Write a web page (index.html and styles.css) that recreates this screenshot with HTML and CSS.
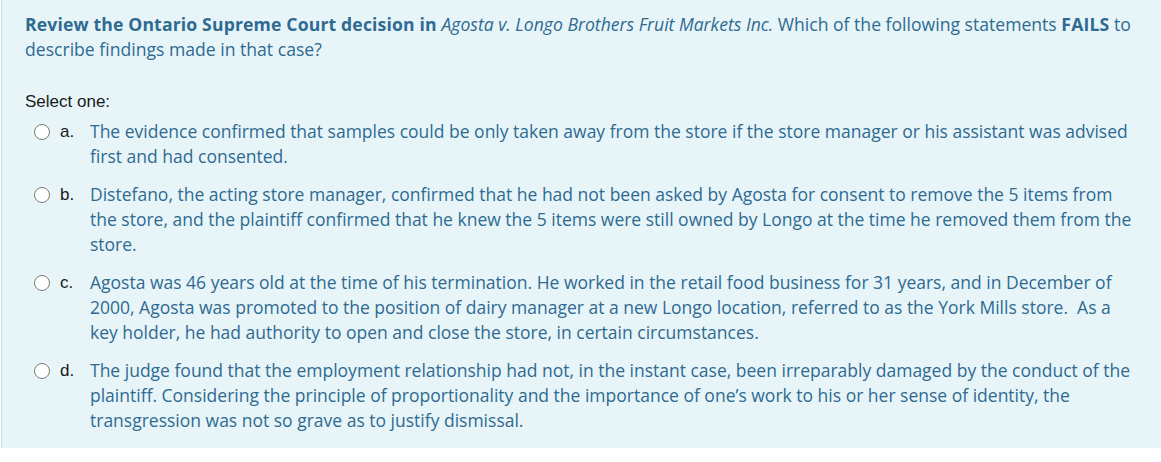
FILE: index.html
```html
<!DOCTYPE html>
<html>
<head>
<meta charset="utf-8">
<link rel="stylesheet" href="styles.css">
</head>
<body>
<div class="formulation">
  <div class="qtext">
    <p><strong>Review the Ontario Supreme Court decision in </strong><em>Agosta v. Longo Brothers Fruit Markets Inc.</em> Which of the following statements <strong>FAILS</strong> to describe findings made in that case?</p>
  </div>
  <div class="ablock">
    <div class="prompt">Select one:</div>
    <div class="answer">
      <div class="opt">
        <span class="radio"></span>
        <span class="letter">a.</span>
        <span class="otext">The evidence confirmed that samples could be only taken away from the store if the store manager or his assistant was advised first and had consented.</span>
      </div>
      <div class="opt">
        <span class="radio"></span>
        <span class="letter">b.</span>
        <span class="otext">Distefano, the acting store manager, confirmed that he had not been asked by Agosta for consent to remove the 5 items from the store, and the plaintiff confirmed that he knew the 5 items were still owned by Longo at the time he removed them from the store.</span>
      </div>
      <div class="opt">
        <span class="radio"></span>
        <span class="letter">c.</span>
        <span class="otext">Agosta was 46 years old at the time of his termination. He worked in the retail food business for 31 years, and in December of 2000, Agosta was promoted to the position of dairy manager at a new Longo location, referred to as the York Mills store.&nbsp; As a key holder, he had authority to open and close the store, in certain circumstances.</span>
      </div>
      <div class="opt">
        <span class="radio"></span>
        <span class="letter">d.</span>
        <span class="otext">The judge found that the employment relationship had not, in the instant case, been irreparably damaged by the conduct of the plaintiff. Considering the principle of proportionality and the importance of one’s work to his or her sense of identity, the transgression was not so grave as to justify dismissal.</span>
      </div>
    </div>
  </div>
</div>
</body>
</html>
```

FILE: styles.css
```css
html, body {
  margin: 0;
  padding: 0;
  background: #ffffff;
}
.formulation {
  box-sizing: border-box;
  width: 1161px;
  height: 448px;
  margin-left: 1px;
  background: #e7f5f8;
  border-left: 1px solid #c4e2ea;
  padding: 12px 18px 0 23px;
  color: #2f6a92;
  font-family: "Open Sans", sans-serif;
  font-size: 17.6px;
  line-height: 24.5px;
}
.qtext p {
  margin: 0;
}
.qtext strong {
  font-weight: 700;
  letter-spacing: 0.15px;
}
.ablock {
  margin-top: 29px;
}
.prompt {
  font-family: "Liberation Sans", Arial, sans-serif;
  color: #1a1a1a;
  font-size: 17px;
  line-height: 24px;
}
.answer {
  margin-top: 5px;
  padding-left: 9px;
  padding-right: 4px;
}
.opt {
  display: flex;
  align-items: flex-start;
  margin-bottom: 13px;
}
.radio {
  flex: none;
  box-sizing: border-box;
  width: 16px;
  height: 16px;
  border: 1px solid #7a7a7a;
  border-radius: 50%;
  background: #ffffff;
  margin-top: 5px;
}
.letter {
  flex: none;
  width: 30px;
  margin-left: 10px;
  font-family: "Liberation Sans", Arial, sans-serif;
  font-size: 17px;
  line-height: 25px;
  color: #1a1a1a;
}
.otext {
  flex: 1;
  font-size: 17.5px;
  line-height: 25px;
}
```
